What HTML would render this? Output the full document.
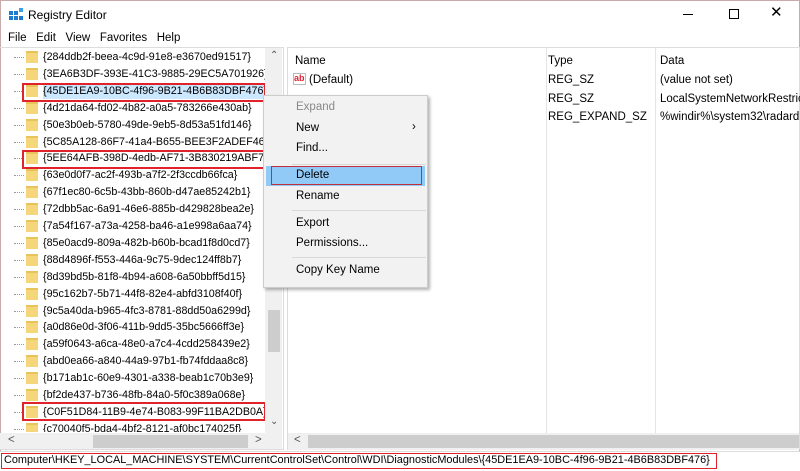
<!DOCTYPE html>
<html><head><style>
*{margin:0;padding:0;box-sizing:border-box}
body{width:800px;height:471px;overflow:hidden;background:#fff;font-family:"Liberation Sans",sans-serif;font-size:11.5px;color:#000;position:relative}
.abs{position:absolute}
.row{position:absolute;left:43px;height:16px;line-height:16px;white-space:nowrap;font-size:10.7px}
.fold{position:absolute;left:-17px;top:2px;width:12px;height:12px;background:#f5d67a;border-top:2px solid #e8c35a}
.dots{position:absolute;left:-29px;top:8px;width:10px;border-top:1px dotted #999}
.mi{position:absolute;left:32px;font-size:11.5px}
</style></head><body>
<div class="abs" style="left:0;top:0;width:800px;height:471px;border:1px solid #c9a9a9"></div>
<svg class="abs" style="left:8px;top:7px" width="16" height="16"><rect x="1" y="4" width="4" height="4" fill="#1e7bd0"/><rect x="6" y="4" width="4" height="4" fill="#1e7bd0"/><rect x="1" y="9" width="4" height="4" fill="#1e7bd0"/><rect x="6" y="9" width="4" height="4" fill="#1e7bd0"/><rect x="11" y="9" width="4" height="4" fill="#1e7bd0"/><rect x="11" y="1" width="4" height="4" fill="#3aa0e8"/></svg>
<div class="abs" style="left:28px;top:8px;font-size:12px">Registry Editor</div>
<div class="abs" style="left:683px;top:14px;width:10px;border-top:1px solid #000"></div>
<div class="abs" style="left:729px;top:9px;width:10px;height:10px;border:1px solid #000"></div>
<div class="abs" style="left:770px;top:3px;font-size:15px">✕</div>
<div class="abs" style="left:8px;top:32px">File&nbsp;&nbsp;&nbsp;Edit&nbsp;&nbsp;&nbsp;View&nbsp;&nbsp;&nbsp;Favorites&nbsp;&nbsp;&nbsp;Help</div>
<div class="abs" style="left:0;top:47px;width:284px;height:403px;border:1px solid #ddd;border-left:none;overflow:hidden">
<div class="abs" style="left:265px;top:0;width:17px;height:385px;background:#f0f0f0"></div>
<div class="abs" style="left:270px;top:2px;font-size:10px;color:#555">⌃</div>
<div class="abs" style="left:268px;top:262px;width:12px;height:42px;background:#cdcdcd"></div>
<div class="abs" style="left:270px;top:368px;font-size:10px;color:#555">⌄</div>
<div class="abs" style="left:0;top:385px;width:282px;height:17px;background:#f0f0f0"></div>
<div class="abs" style="left:93px;top:387px;width:155px;height:13px;background:#cdcdcd"></div>
<div class="abs" style="left:8px;top:386px;color:#555">&lt;</div>
<div class="abs" style="left:255px;top:386px;color:#555">&gt;</div>
</div>
<div id="tree"></div>
<div class="abs" style="left:287px;top:47px;width:513px;height:403px;border:1px solid #ddd">
<div class="abs" style="left:258px;top:0;height:385px;border-left:1px solid #e5e5e5"></div>
<div class="abs" style="left:367px;top:0;height:385px;border-left:1px solid #e5e5e5"></div>
<div class="abs" style="left:0;top:385px;width:511px;height:17px;background:#f0f0f0"></div>
<div class="abs" style="left:20px;top:387px;width:491px;height:13px;background:#cdcdcd"></div>
<div class="abs" style="left:6px;top:386px;color:#555">&lt;</div>
</div>
<div class="abs" style="left:295px;top:55px">Name</div>
<div class="abs" style="left:548px;top:55px">Type</div>
<div class="abs" style="left:660px;top:55px">Data</div>
<div class="abs" style="left:293px;top:73px;width:13px;height:12px;border:1px solid #bbb;font-size:9px;color:#d23;font-weight:bold;line-height:9px">ab</div>
<div class="abs" style="left:309px;top:74px">(Default)</div>
<div class="abs" style="left:548px;top:74px">REG_SZ</div><div class="abs" style="left:660px;top:74px">(value not set)</div>
<div class="abs" style="left:548px;top:93px">REG_SZ</div><div class="abs" style="left:660px;top:93px;white-space:nowrap">LocalSystemNetworkRestric</div>
<div class="abs" style="left:548px;top:111px">REG_EXPAND_SZ</div><div class="abs" style="left:660px;top:111px;white-space:nowrap">%windir%\system32\radard</div>
<div class="abs" style="left:263px;top:95px;width:165px;height:193px;background:#f2f2f2;border:1px solid #ccc;box-shadow:2px 2px 3px rgba(0,0,0,.3)">
<div class="mi" style="top:5px;color:#888">Expand</div>
<div class="mi" style="top:26px">New</div><div class="abs" style="left:148px;top:25px">›</div>
<div class="mi" style="top:46px">Find...</div>
<div class="abs" style="left:28px;top:68px;width:134px;border-top:1px solid #d8d8d8"></div>
<div class="abs" style="left:2px;top:70px;width:159px;height:20px;background:#91c9f7"></div>
<div class="abs" style="left:7px;top:70px;width:151px;height:19px;border:1px solid #c0303a"></div>
<div class="mi" style="top:73px">Delete</div>
<div class="mi" style="top:94px">Rename</div>
<div class="abs" style="left:28px;top:114px;width:134px;border-top:1px solid #d8d8d8"></div>
<div class="mi" style="top:121px">Export</div>
<div class="mi" style="top:141px">Permissions...</div>
<div class="abs" style="left:28px;top:161px;width:134px;border-top:1px solid #d8d8d8"></div>
<div class="mi" style="top:168px">Copy Key Name</div>
</div>
<div class="abs" style="left:0;top:451px;width:800px;height:20px;background:#fff;border-top:1px solid #ddd"></div>
<div class="abs" style="left:1px;top:453px;width:716px;height:16px;border:1px solid #e0222a"></div>
<div class="abs" style="left:4px;top:454px;white-space:nowrap;font-size:10.9px">Computer\HKEY_LOCAL_MACHINE\SYSTEM\CurrentControlSet\Control\WDI\DiagnosticModules\{45DE1EA9-10BC-4f96-9B21-4B6B83DBF476}</div>
<script>
var n=["{284ddb2f-beea-4c9d-91e8-e3670ed91517}","{3EA6B3DF-393E-41C3-9885-29EC5A701926}","{45DE1EA9-10BC-4f96-9B21-4B6B83DBF476}","{4d21da64-fd02-4b82-a0a5-783266e430ab}","{50e3b0eb-5780-49de-9eb5-8d53a51fd146}","{5C85A128-86F7-41a4-B655-BEE3F2ADEF46}","{5EE64AFB-398D-4edb-AF71-3B830219ABF7}","{63e0d0f7-ac2f-493b-a7f2-2f3ccdb66fca}","{67f1ec80-6c5b-43bb-860b-d47ae85242b1}","{72dbb5ac-6a91-46e6-885b-d429828bea2e}","{7a54f167-a73a-4258-ba46-a1e998a6aa74}","{85e0acd9-809a-482b-b60b-bcad1f8d0cd7}","{88d4896f-f553-446a-9c75-9dec124ff8b7}","{8d39bd5b-81f8-4b94-a608-6a50bbff5d15}","{95c162b7-5b71-44f8-82e4-abfd3108f40f}","{9c5a40da-b965-4fc3-8781-88dd50a6299d}","{a0d86e0d-3f06-411b-9dd5-35bc5666ff3e}","{a59f0643-a6ca-48e0-a7c4-4cdd258439e2}","{abd0ea66-a840-44a9-97b1-fb74fddaa8c8}","{b171ab1c-60e9-4301-a338-beab1c70b3e9}","{bf2de437-b736-48fb-84a0-5f0c389a068e}","{C0F51D84-11B9-4e74-B083-99F11BA2DB0A}","{c70040f5-bda4-4bf2-8121-af0bc174025f}"];
var h="";n.forEach(function(s,i){var y=49+i*16.9;var st=(i==2?"background:#cce8ff;":"");h+='<div class="row" style="top:'+y+'px;'+st+'"><span class="dots"></span><span class="fold"></span>'+s+'</div>';});
h+='<div class="abs" style="left:22px;top:83px;width:244px;height:19px;border:2px solid #e0222a"></div>';
h+='<div class="abs" style="left:22px;top:150px;width:244px;height:19px;border:2px solid #e0222a"></div>';
h+='<div class="abs" style="left:22px;top:402px;width:244px;height:19px;border:2px solid #e0222a"></div>';
document.getElementById("tree").innerHTML='<div class="abs" style="left:0;top:47px;width:265px;height:385px;overflow:hidden"><div style="position:relative;top:-47px">'+h+'</div></div>';
</script>
</body></html>
